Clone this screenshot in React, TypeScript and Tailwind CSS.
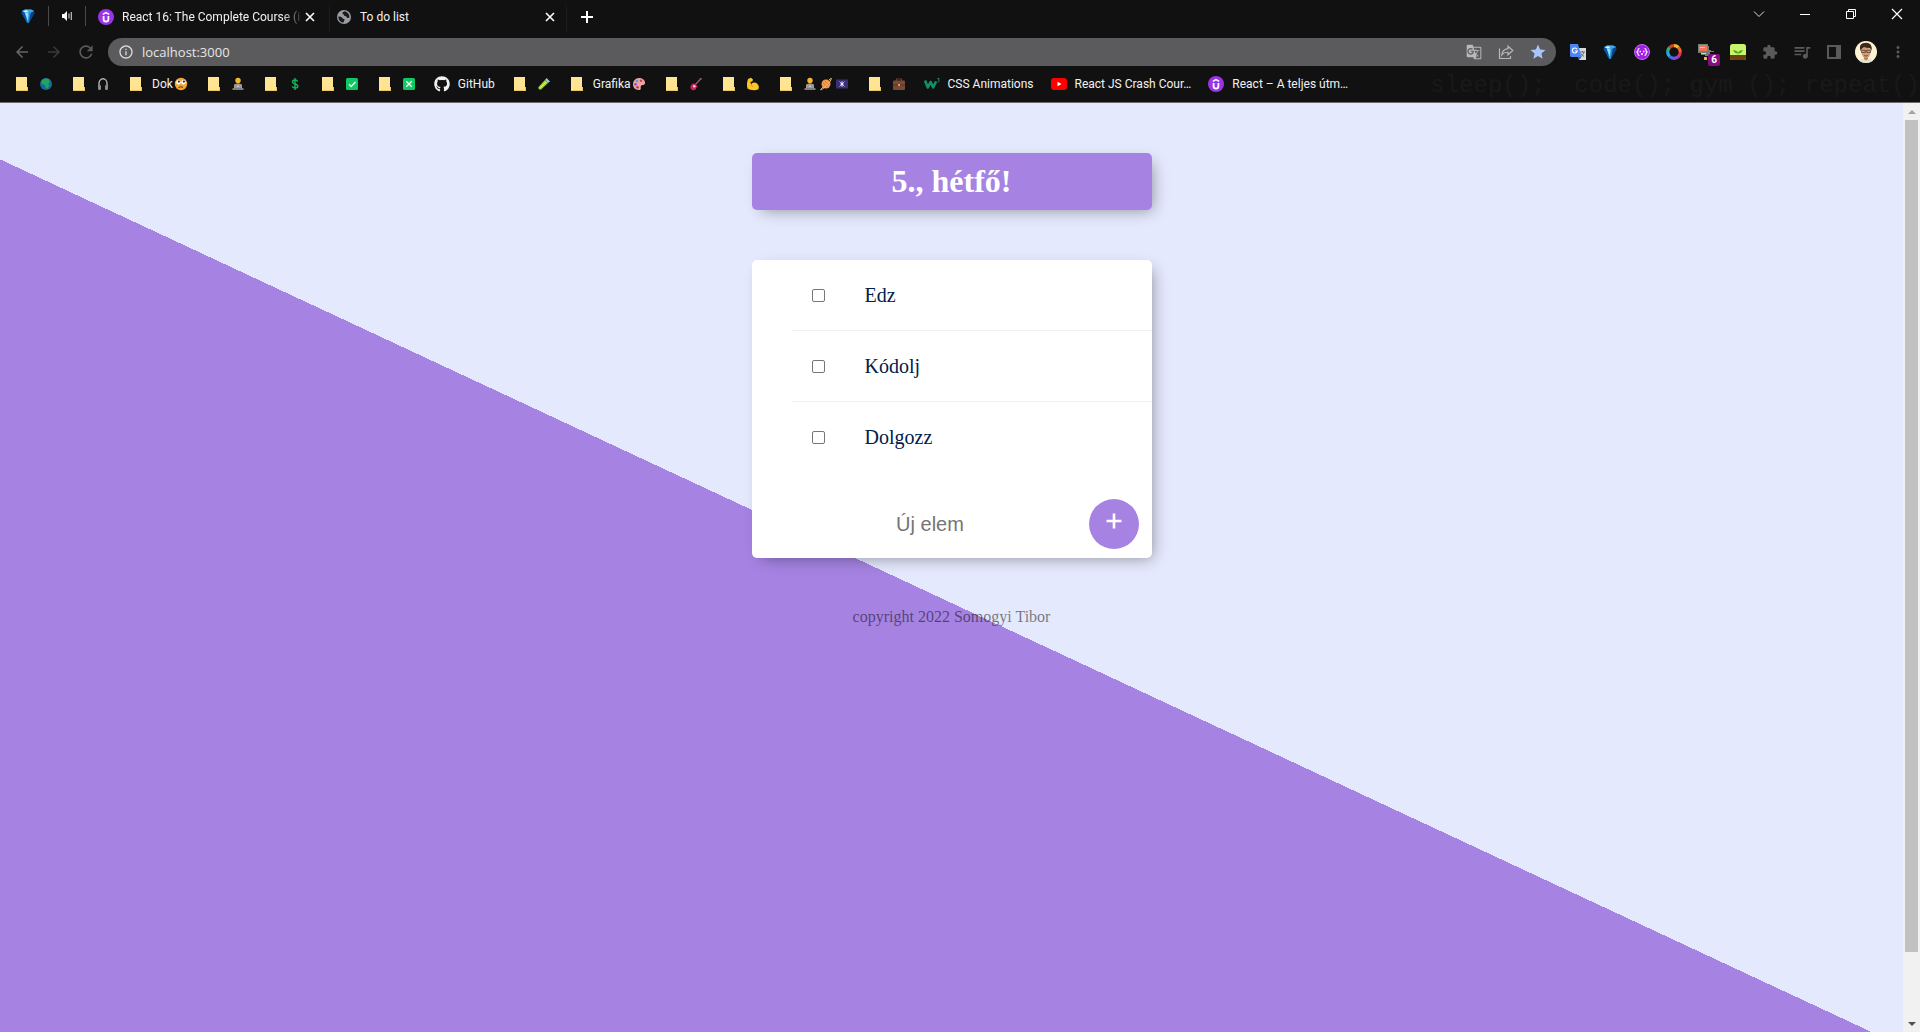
import { Fragment, type ReactNode } from "react";
import {
  MdArrowBack,
  MdArrowForward,
  MdExtension,
  MdGTranslate,
  MdInfoOutline,
  MdMoreVert,
  MdQueueMusic,
  MdRefresh,
  MdStar,
} from "react-icons/md";
import { FaGithub } from "react-icons/fa";

/* ---------- small drawings ---------- */

function Gem() {
  return (
    <svg viewBox="0 0 16 16" className="size-4">
      <path d="M2 3 5 1.500h6L14 3l.2 2.200L8.800 15H7.200L1.800 5.200z" fill="#1b86d6" />
      <path d="M2 3 5 4.500 7 15 1.800 5.200z" fill="#0b4fa0" />
      <path d="M4.500 4.200h4.200L8 13.500z" fill="#8fdcff" />
      <path d="M11 4.200 14 3l.2 2.200L8.800 15z" fill="#0a3f86" />
      <path d="M2 3 5 1.500h6L14 3l-3 1.500H5z" fill="#3fa7ea" />
      <path d="M3 3.200 6 2.200l2.500.9L6 4.500z" fill="#e4f8ff" />
    </svg>
  );
}

function Udemy() {
  return (
    <svg viewBox="0 0 16 16" className="size-4 shrink-0">
      <circle cx="8" cy="8" r="8" fill="#9b34e6" />
      <path d="M4.800 5.300 8 3.500l3.200 1.800" fill="none" stroke="#fff" strokeWidth="1.500" />
      <path d="M5.600 7v3.200a2.400 2.400 0 0 0 4.800 0V7" fill="none" stroke="#fff" strokeWidth="1.800" />
    </svg>
  );
}

function Globe() {
  return (
    <svg viewBox="0 0 16 16" className="size-4 shrink-0">
      <circle cx="8" cy="8" r="7" fill="#9a9da1" />
      <path
        d="M2.300 7.500q2.200-.3 3.700 1 .6 1.500 2.500 1.500 0 2-1.300 3.800Q2.500 13 2.300 7.500zM8.500 2.300q-2.500.7-2 2.700 1.800.2 1.700 1.800 2.300.2 2.800 1.900 1.800.6 2.500-.5.200-2-1.500-4Q10 2.300 8.500 2.300z"
        fill="#1b1b1c"
      />
    </svg>
  );
}

function Folder() {
  return (
    <svg viewBox="0 0 16 16" className="size-4 shrink-0">
      <path d="M2 1h11v10h1v4H2z" fill="#ffe591" />
      <path d="M12 11h2v4h-2zM2 14h10v1H2z" fill="#e9c663" />
      <path d="M12 11h1v3h-1z" fill="#ffe591" />
    </svg>
  );
}

function Speaker() {
  return (
    <svg viewBox="0 0 12 12" className="size-3">
      <path d="M1 4h2l3-3v10L3 8H1z" fill="#fff" />
      <path d="M8 3.500v5M10.300 2v8" stroke="#cfcfcf" strokeWidth="1.100" />
    </svg>
  );
}

function Cross() {
  return (
    <svg viewBox="0 0 10 10" className="size-2.5">
      <path d="m1 1 8 8M9 1 1 9" stroke="#fff" strokeWidth="1.600" />
    </svg>
  );
}

function Share() {
  return (
    <svg viewBox="0 0 16 16" className="size-4">
      <path d="M1.500 4.500v10h11v-2.500" fill="none" stroke="currentColor" strokeWidth="1.200" />
      <path d="M10 2.200 14.800 6.500 10 10.800V8.300Q6 8 3.700 11 4.500 5.300 10 4.700z" fill="none" stroke="currentColor" strokeWidth="1.200" />
    </svg>
  );
}

function Emoji({ children }: { children: ReactNode }) {
  return (
    <svg viewBox="0 0 16 16" className="size-4 shrink-0">
      {children}
    </svg>
  );
}

const earth = (
  <Emoji>
    <circle cx="8" cy="8" r="6" fill="#1467a3" />
    <path d="M4 4c2-2 5-2 7-.8L12 6l-1.500 1.500L11 10l-2 3-1.500-1.500L7 9 4.500 8.500 3 6.500z" fill="#21a35f" />
    <path d="M12.500 8.500 13.500 9l-1 2z" fill="#21a35f" />
  </Emoji>
);
const headphones = (
  <Emoji>
    <path d="M4 11V7.500a4 4.800 0 0 1 8 0V11" fill="none" stroke="#b4b4b8" strokeWidth="1.400" />
    <rect x="3" y="9" width="3" height="5" rx="1.200" fill="#8a8a90" />
    <rect x="10" y="9" width="3" height="5" rx="1.200" fill="#8a8a90" />
  </Emoji>
);
const rollingEyes = (
  <Emoji>
    <circle cx="8" cy="8" r="6.200" fill="#f5a533" />
    <circle cx="5.500" cy="6.200" r="2.200" fill="#fff" />
    <circle cx="10.500" cy="6.200" r="2.200" fill="#fff" />
    <circle cx="5.900" cy="5.600" r="1.100" fill="#3b2a20" />
    <circle cx="10.900" cy="5.600" r="1.100" fill="#3b2a20" />
    <path d="M5.500 11.500q2.500-1.200 4.500-.3" fill="none" stroke="#5b3413" />
  </Emoji>
);
const technologist = (
  <Emoji>
    <circle cx="8" cy="4.500" r="2.700" fill="#f5b92e" />
    <path d="M4 9q4-3.500 8 0v3H4z" fill="#d99b25" />
    <path d="M4.500 8h7v4.500h-7z" fill="#98989d" />
    <path d="M2.500 12h11v2h-11z" fill="#7c7c82" />
    <circle cx="8" cy="10.200" r=".8" fill="#e6e6ea" />
  </Emoji>
);
const dollar = (
  <Emoji>
    <path
      d="M10.700 5.500C10 3.500 5.500 3.500 5.500 6c0 2.600 5.300 1.400 5.300 4.200 0 2.400-5 2.400-5.600.2M8 2v12"
      fill="none"
      stroke="#14b45a"
      strokeWidth="1.400"
    />
  </Emoji>
);
const check = (
  <Emoji>
    <rect x="2" y="2" width="12" height="12" rx="1.500" fill="#0ec864" />
    <path d="m5 8.300 2.200 2.200L11.500 6" fill="none" stroke="#fff" strokeWidth="1.300" />
  </Emoji>
);
const cross = (
  <Emoji>
    <rect x="2" y="2" width="12" height="12" rx="1.500" fill="#0ec864" />
    <path d="m5.200 5.200 5.600 5.600m0-5.600-5.600 5.600" fill="none" stroke="#fff" strokeWidth="1.300" />
  </Emoji>
);
const tube = (
  <Emoji>
    <path d="m10.500 2 3.500 3.500-2 1.500L9 4z" fill="#9fc4dc" />
    <path d="m9 4 3 3-7 6.500q-3 .5-2.500-2.500z" fill="#a6d52f" />
    <path d="m4 12 6-6" stroke="#d9f27c" />
  </Emoji>
);
const palette = (
  <Emoji>
    <path d="M8 2c4 0 6.500 2.500 6 5.500-.4 2-3 1-4 2.500s1 4-2 4C4 14 1.800 11 2 8s2.500-6 6-6z" fill="#e5a79f" />
    <circle cx="6" cy="5" r="1.200" fill="#4e9be0" />
    <circle cx="10" cy="4.800" r="1.200" fill="#e0335a" />
    <circle cx="4.500" cy="8.300" r="1.200" fill="#8c3fc1" />
    <circle cx="6.500" cy="11.300" r="1.200" fill="#d02c44" />
  </Emoji>
);
const guitar = (
  <Emoji>
    <path d="m7 9 5.500-6" stroke="#a8546b" strokeWidth="1.300" />
    <path d="m11.500 2.500 1.500-.8 1 1-1 1.500z" fill="#8d5a67" />
    <path d="M3 9q1.500-.5 2-2l5 3.500q-2 .5-2 2.500-2 2-4.200.7T3 9z" fill="#d6205a" />
    <circle cx="6.300" cy="10.300" r="1.200" fill="#ffd6e0" />
  </Emoji>
);
const biceps = (
  <Emoji>
    <path
      d="M3 3 6 1.800l2 1.700-.8 2.300-1.700-.3.500 3c1-2 4-2.800 6-1s2.500 4.500 1 6c-3 1.200-8 .8-10.500-1C1.500 9.500 2 6 3 3z"
      fill="#fcc626"
    />
    <path d="M6 8.500q.3 1.700 2 2" fill="none" stroke="#d08d10" />
  </Emoji>
);
const planet = (
  <Emoji>
    <circle cx="8" cy="8" r="4.500" fill="#f0a04a" />
    <path d="m4.800 6.500 5 5M6.500 4.500l5 5" stroke="#d9773c" />
    <path d="M5 11Q2.500 13.500 2.700 13.800 4 14 8.500 9.500T13.500 2.500Q13 2 11 4" fill="none" stroke="#f3bd72" />
  </Emoji>
);
const galaxy = (
  <Emoji>
    <rect x="2" y="3.500" width="12" height="9" fill="#3a2f72" />
    <path d="m5.500 5.500 5 5m0-5-5 5M8 5v6" stroke="#b9a9e6" />
    <circle cx="8" cy="8" r="1.500" fill="#f1eaff" />
  </Emoji>
);
const briefcase = (
  <Emoji>
    <path d="M5.500 5V3h5v2" fill="none" stroke="#6b3d2c" strokeWidth="1.200" />
    <rect x="2" y="4.500" width="12" height="9.500" rx="1" fill="#7a4a38" />
    <path d="M2 9h12" stroke="#56301f" />
    <rect x="7.200" y="8" width="1.800" height="2" fill="#f0a04a" />
  </Emoji>
);
const w3 = (
  <svg viewBox="0 0 16 16" className="size-4 shrink-0">
    <path d="m1 4.500 2.800 7 2.800-5.500 2.600 5.500 2.800-6" fill="none" stroke="#109065" strokeWidth="2.600" strokeLinejoin="round" />
    <path d="M13.300 2.500h2L14.300 4q1.200.2.900 1.200t-1.900.8" fill="none" stroke="#109065" strokeWidth=".9" />
  </svg>
);
const youtube = (
  <svg viewBox="0 0 16 16" className="size-4 shrink-0">
    <rect y="2" width="16" height="12" rx="3" fill="#f00" />
    <path d="m6.500 5.800 4 2.200-4 2.200z" fill="#fff" />
  </svg>
);

function GoogleTranslate() {
  return (
    <svg viewBox="0 0 16 16" className="size-4">
      <path d="M7 4h9v12H9z" fill="#d6d8dc" />
      <path d="M10 8h5M12.500 7v1m1.500 0q-.5 3-3 4.500M11 9.500q1 2 3 3" fill="none" stroke="#63686e" strokeWidth=".9" />
      <path d="M0 0h8l3.500 13H1.500Q0 13 0 11.500z" fill="#4a86ee" />
      <path d="M8 13h3.500L9 16z" fill="#2f5fc4" />
      <path d="M7 5.200A2.500 2.500 0 1 0 7.300 7H5" fill="none" stroke="#fff" strokeWidth="1.200" />
    </svg>
  );
}

function Brackets() {
  return (
    <svg viewBox="0 0 16 16" className="size-4">
      <circle cx="8" cy="8" r="7.500" fill="#a41fe6" stroke="#c46bf0" />
      <path
        d="M5.500 4.500Q4 4.500 4 6t-1 2q1 .5 1 2t1.500 1.500M10.500 4.500Q12 4.500 12 6t1 2q-1 .5-1 2t-1.500 1.500"
        fill="none"
        stroke="#fff"
        strokeWidth="1.200"
      />
      <path d="M5.500 7.500H7m2 0h1.500M7 10h2" stroke="#fff" strokeWidth="1.400" />
    </svg>
  );
}

const wheelColors = ["#f4b92f", "#f0642c", "#e2335b", "#8a4bd3", "#3f6ee8", "#2fa6e0", "#28b37c", "#e03c2c"];
const wheelTurns = [0, 45, 90, 135, 180, 225, 270, 315];

function ColorWheel() {
  return (
    <svg viewBox="0 0 16 16" className="size-4">
      {wheelTurns.map((turn, i) => (
        <path
          key={turn}
          d="M8 1.700A6.300 6.300 0 0 1 12.500 3.600"
          fill="none"
          stroke={wheelColors[i]}
          strokeWidth="3.200"
          transform={`rotate(${turn} 8 8)`}
        />
      ))}
    </svg>
  );
}

function Robot() {
  return (
    <span className="relative flex">
      <svg viewBox="0 0 16 16" className="size-4">
        <path d="M0 0h10v2h1v4h2v1h3v1h-4v4H7v-1H3V9H0z" fill="#6f8075" />
        <path d="M1 1h8v6H1z" fill="#f2735a" />
        <path d="M2 3h5v1H2zM3 9h5v1H3z" fill="#ffc2ab" />
        <path d="M6 13h3v3H6z" fill="#e8b64a" />
      </svg>
      <span className="absolute top-2.5 left-2.5 flex size-3 items-center justify-center rounded-xs bg-[#850e87] text-[10px] font-bold text-white">
        6
      </span>
    </span>
  );
}

function Sprout() {
  return (
    <svg viewBox="0 0 16 16" className="size-4">
      <rect width="16" height="16" rx="2.500" fill="#c7f56c" />
      <path d="M0 11h16v2.500q0 2.500-2.500 2.500h-11Q0 16 0 13.500z" fill="#70400f" />
      <path d="M8 11V9.500M3.500 6.500q3.500-.3 4.500 2.500-3 .8-4.500-2.500zM12.500 6.500Q9 6.200 8 9q3 .8 4.500-2.500z" fill="#4aa01c" stroke="#4aa01c" strokeWidth=".5" />
    </svg>
  );
}

function Avatar() {
  return (
    <svg viewBox="0 0 22 22" className="size-[22px]">
      <circle cx="11" cy="11" r="11" fill="#fdf3d3" />
      <path d="M4.500 20q1.500-3 6.500-3t6.500 3Q11 24 4.500 20z" fill="#dfe3d0" />
      <path d="M9 14h4v4l-2 1.500L9 18z" fill="#b97f58" />
      <ellipse cx="11" cy="11" rx="4.600" ry="6" fill="#d39c74" />
      <path d="M5.500 10Q3.500 3.500 8 2.300q5-1.800 7.800 1.500 1.700 2.700.4 6.200L15 7q-4 0-6-1-2 1-3.500 4z" fill="#3d2819" />
      <path d="M6.500 9.300h3.700v2.200H6.500zm5.300 0h3.700v2.200h-3.700zM10 10h2" fill="none" stroke="#4a3a30" strokeWidth=".7" />
      <path d="M9 14.500q2 1 4 0" fill="none" stroke="#a33f35" />
    </svg>
  );
}

/* ---------- browser chrome ---------- */

function IconButton({ label, className = "", children }: { label: string; className?: string; children: ReactNode }) {
  return (
    <button type="button" aria-label={label} className={`flex w-8 shrink-0 items-center justify-center ${className}`}>
      {children}
    </button>
  );
}

function WindowButton({ label, children }: { label: string; children: ReactNode }) {
  return (
    <button type="button" aria-label={label} className="flex w-[46px] justify-center">
      <svg viewBox="0 0 12 12" className="size-3">
        {children}
      </svg>
    </button>
  );
}

function TabStrip() {
  return (
    <div className="flex h-8 items-center">
      <div className="flex w-12 justify-center pl-2">
        <Gem />
      </div>
      <div className="h-5 w-px bg-[#4a4a4a]" />
      <IconButton label="Mute tab" className="ml-0.5">
        <Speaker />
      </IconButton>
      <div className="ml-0.5 h-5 w-px bg-[#4a4a4a]" />
      <div className="flex h-8 w-[243px] items-center pt-0.5 pl-3">
        <Udemy />
        <span className="ml-2 w-[182px] whitespace-nowrap [mask-image:linear-gradient(to_right,#000_88%,transparent)]">
          React 16: The Complete Course (i
        </span>
        <button type="button" aria-label="Close tab" className="flex w-3 justify-center">
          <Cross />
        </button>
      </div>
      <div className="flex h-8 w-[238px] items-center rounded-t-lg border-x border-[#1c1c1c] pt-0.5 pl-1.5">
        <Globe />
        <span className="ml-2 flex-1">To do list</span>
        <IconButton label="Close tab">
          <Cross />
        </IconButton>
      </div>
      <IconButton label="New tab" className="ml-1 pt-0.5">
        <svg viewBox="0 0 14 14" className="size-3.5">
          <path d="M7 1v12M1 7h12" stroke="#fff" strokeWidth="2" />
        </svg>
      </IconButton>
      <div className="ml-auto flex pb-1">
        <WindowButton label="Search tabs">
          <path d="m1 3.500 5 5 5-5" fill="none" stroke="#ddd" />
        </WindowButton>
        <WindowButton label="Minimize">
          <path d="M1 6.500h10" stroke="#fff" />
        </WindowButton>
        <WindowButton label="Restore">
          <path d="M1.500 3.500h7v7h-7zM3.500 3.500v-2h7v7h-2" fill="none" stroke="#fff" />
        </WindowButton>
        <WindowButton label="Close window">
          <path d="m1 1 10 10M11 1 1 11" stroke="#fff" strokeWidth="1.200" />
        </WindowButton>
      </div>
    </div>
  );
}

function Toolbar() {
  return (
    <div className="flex h-10 items-center px-1.5 text-[#5a5a5a]">
      <IconButton label="Back">
        <MdArrowBack className="size-[18px] text-[#666]" />
      </IconButton>
      <IconButton label="Forward">
        <MdArrowForward className="size-[18px] text-[#3a3a3a]" />
      </IconButton>
      <IconButton label="Reload">
        <MdRefresh className="size-5" />
      </IconButton>
      <div className="ml-1.5 flex h-7 flex-1 items-center rounded-full bg-[#5b5b5d] pr-0.5 pl-2.5 text-[#b8b8ba]">
        <MdInfoOutline className="size-4 text-[#dcdcdc]" />
        <input
          aria-label="Address"
          defaultValue="localhost:3000"
          className="ml-2 h-7 min-w-0 flex-1 bg-transparent font-['Open_Sans','Noto_Sans',sans-serif] text-[13px] text-[#e6e6e6] outline-none"
        />
        <IconButton label="Translate this page">
          <MdGTranslate className="size-4" />
        </IconButton>
        <IconButton label="Share">
          <Share />
        </IconButton>
        <IconButton label="Edit bookmark">
          <MdStar className="size-[18px] text-[#a9c6fb]" />
        </IconButton>
      </div>
      <div className="ml-1.5 flex items-center">
        <IconButton label="Google Translate">
          <GoogleTranslate />
        </IconButton>
        <IconButton label="Gem extension">
          <Gem />
        </IconButton>
        <IconButton label="JSON viewer">
          <Brackets />
        </IconButton>
        <IconButton label="Color picker">
          <ColorWheel />
        </IconButton>
        <IconButton label="Robot extension">
          <Robot />
        </IconButton>
        <IconButton label="Sprout extension">
          <Sprout />
        </IconButton>
        <IconButton label="Extensions">
          <MdExtension className="size-4" />
        </IconButton>
        <IconButton label="Media controls">
          <MdQueueMusic className="size-5" />
        </IconButton>
        <IconButton label="Side panel">
          <svg viewBox="0 0 14 14" className="size-3.5">
            <path d="M1 1h12v12H1z" fill="none" stroke="currentColor" strokeWidth="2" />
            <path d="M9 1h4v12H9z" fill="currentColor" />
          </svg>
        </IconButton>
        <IconButton label="Profile">
          <Avatar />
        </IconButton>
        <IconButton label="Menu">
          <MdMoreVert className="size-[18px]" />
        </IconButton>
      </div>
    </div>
  );
}

type Bookmark = { name: string; icon?: ReactNode; text?: string; emoji?: ReactNode[] };

const bookmarks: Bookmark[] = [
  { name: "World", emoji: [earth] },
  { name: "Music", emoji: [headphones] },
  { name: "Dok", text: "Dok", emoji: [rollingEyes] },
  { name: "Work", emoji: [technologist] },
  { name: "Money", emoji: [dollar] },
  { name: "Done", emoji: [check] },
  { name: "Closed", emoji: [cross] },
  { name: "GitHub", text: "GitHub", icon: <FaGithub className="size-4 shrink-0" /> },
  { name: "Tests", emoji: [tube] },
  { name: "Grafika", text: "Grafika", emoji: [palette] },
  { name: "Guitar", emoji: [guitar] },
  { name: "Training", emoji: [biceps] },
  { name: "Space", emoji: [technologist, planet, galaxy] },
  { name: "Business", emoji: [briefcase] },
  { name: "CSS Animations", text: "CSS Animations", icon: w3 },
  { name: "React JS Crash Course", text: "React JS Crash Cour…", icon: youtube },
  { name: "React – A teljes útmutató", text: "React – A teljes útm…", icon: <Udemy /> },
];

function BookmarksBar() {
  return (
    <nav aria-label="Bookmarks" className="flex h-6 items-center gap-[17px] pl-3.5">
      {bookmarks.map((b) => (
        <a key={b.name} href="#" aria-label={b.name} className="flex shrink-0 items-center gap-2 whitespace-nowrap">
          {b.icon ?? <Folder />}
          <span className="flex items-center">
            {b.text}
            {b.emoji?.map((e, i) => (
              <Fragment key={i}>{e}</Fragment>
            ))}
          </span>
        </a>
      ))}
    </nav>
  );
}

/* ---------- page ---------- */

const shadow = "shadow-[5px_5px_15px_-5px_rgba(0,0,0,0.4)]";
const items = ["Edz", "Kódolj", "Dolgozz"];

function TodoPage() {
  return (
    <main className="flex h-[calc(100%+71px)] min-w-0 flex-1 flex-col items-center bg-[linear-gradient(205deg,#e4e9fd_50%,#a683e3_50%)] px-4 pt-[50px] font-['Liberation_Serif','Times_New_Roman',serif] text-[#00204a]">
      <header className={`w-full max-w-[400px] rounded-[5px] bg-[#a683e3] py-2.5 text-center ${shadow}`}>
        <h1 className="text-[32px] leading-[37px] font-bold text-white">5., hétfő!</h1>
      </header>
      <section className={`mt-[50px] w-full max-w-[400px] rounded-[5px] bg-white ${shadow}`}>
        <ul className="divide-y divide-[#f1f1f1] pl-10">
          {items.map((item) => (
            <li key={item}>
              <label className="flex h-[70px] items-center pl-5">
                <input
                  type="checkbox"
                  className="size-[13px] appearance-none rounded-[2px] border border-[#767676] bg-white checked:bg-[#a683e3]"
                />
                <span className="ml-10 text-xl">{item}</span>
              </label>
            </li>
          ))}
        </ul>
        <form className="flex items-center pt-[22px] pr-[13px] pb-1 pl-5">
          <input
            aria-label="Új elem"
            placeholder="Új elem"
            className="h-[60px] min-w-0 flex-1 bg-transparent text-center font-['Liberation_Sans',Arial,sans-serif] text-xl outline-none placeholder:text-[#757575]"
          />
          <button
            type="button"
            aria-label="Hozzáadás"
            className="flex size-[50px] items-center justify-center rounded-full bg-[#a683e3] pb-1.5"
          >
            <svg viewBox="0 0 16 16" className="size-4">
              <path d="M8 .500v15M.500 8h15" stroke="#fff" strokeWidth="2.600" />
            </svg>
          </button>
        </form>
      </section>
      <footer className="mt-[50px] text-base leading-[18px] text-black/50">copyright 2022 Somogyi Tibor</footer>
    </main>
  );
}

function Scrollbar() {
  return (
    <div aria-hidden="true" className="flex w-[17px] shrink-0 flex-col items-center bg-[#f1f1f1]">
      <div className="flex h-[17px] items-center">
        <svg viewBox="0 0 8 4" className="h-1 w-2">
          <path d="M0 4 4 0l4 4z" fill="#a3a3a3" />
        </svg>
      </div>
      <div className="flex w-[13px] flex-1 flex-col">
        <div className="h-[93%] bg-[#c1c1c1]" />
      </div>
      <div className="flex h-[17px] items-center">
        <svg viewBox="0 0 8 4" className="h-1 w-2">
          <path d="m0 0 4 4 4-4z" fill="#505050" />
        </svg>
      </div>
    </div>
  );
}

export default function App() {
  return (
    <div className="flex h-screen flex-col overflow-hidden">
      <div className="relative shrink-0 border-b border-[#6b6b70] bg-[#111111] pb-1.5 font-['Roboto','Open_Sans',sans-serif] text-xs text-[#f1f1f1]">
        <div
          aria-hidden="true"
          className="absolute right-0 bottom-0 font-['Liberation_Mono',monospace] text-2xl whitespace-pre text-[#191919]"
        >
          sleep();  code(); gym (); repeat()
        </div>
        <div className="relative">
          <TabStrip />
          <Toolbar />
          <BookmarksBar />
        </div>
      </div>
      <div className="flex min-h-0 flex-1">
        <TodoPage />
        <Scrollbar />
      </div>
    </div>
  );
}
